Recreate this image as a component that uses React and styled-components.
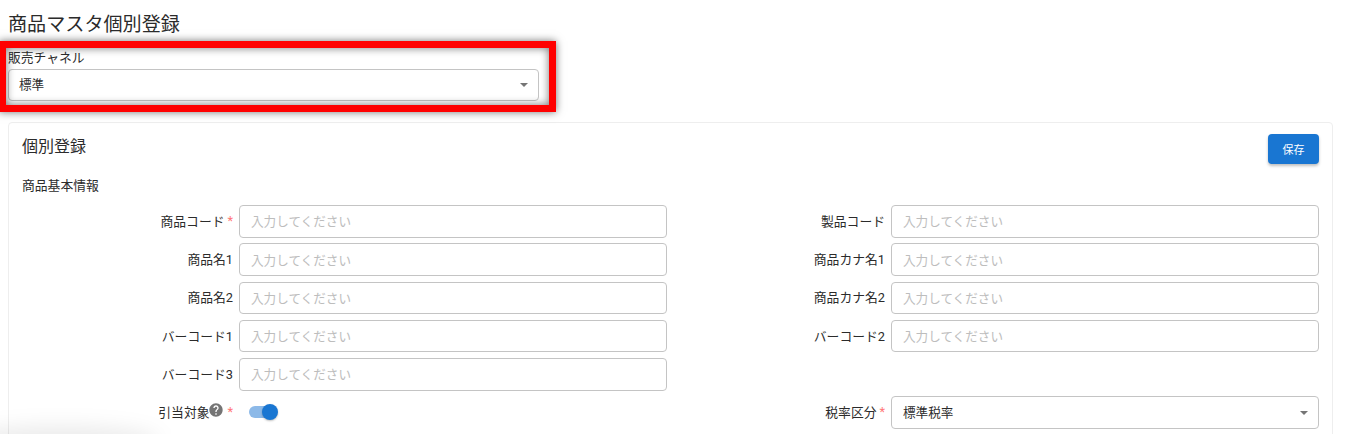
import React from 'react';
import styled, { createGlobalStyle } from 'styled-components';

const GlobalStyle = createGlobalStyle`
	html, body {
		margin: 0;
		height: 434px;
		overflow: hidden;
		background: #fff;
		font-family: Roboto, "Noto Sans CJK JP", sans-serif;
		color: #2b2b2b;
	}
	* {
		box-sizing: border-box;
	}
`;

const Page = styled.div`
	padding: 14px 13px 0 8px;
`;

const PageTitle = styled.h1`
	margin: 0;
	font-size: 19.1px;
	line-height: 22px;
	font-weight: 400;
`;

const ChannelBlock = styled.section`
	position: relative;
	margin-top: 15px;
	width: 531px;
`;

const Highlight = styled.div`
	position: absolute;
	left: -9px;
	top: -10px;
	width: 557px;
	height: 71px;
	border: 7px solid #ff0000;
	box-shadow: 0 0 8px rgba(0, 0, 0, 0.55), inset 0 0 8px rgba(0, 0, 0, 0.55);
	pointer-events: none;
`;

const ChannelLabel = styled.div`
	font-size: 12.8px;
	line-height: 14px;
	margin-bottom: 4px;
`;

const Field = styled.div`
	height: 32px;
	display: flex;
	align-items: center;
	justify-content: space-between;
	padding: 0 11px ${(p) => (p.$placeholder ? '1px' : '3px')} 10px;
	border: 1px solid #c4c4c4;
	border-radius: 4px;
	background: #fff;
	font-size: 12.6px;
	color: ${(p) => (p.$placeholder ? '#bdbdbd' : '#2b2b2b')};
`;

const FormField = styled(Field)`
	padding-left: 11px;
	height: 32.5px;
`;

const Caret = styled.span`
	width: 0;
	height: 0;
	margin-right: -1px;
	margin-top: 3px;
	border-left: 4px solid transparent;
	border-right: 4px solid transparent;
	border-top: 4px solid #757575;
`;

const Card = styled.section`
	margin-top: 21px;
	height: 320px;
	border: 1px solid #eeeeee;
	border-radius: 4px;
	padding: 11px 13px 0;
`;

const CardHeader = styled.div`
	display: flex;
	align-items: flex-start;
	justify-content: space-between;
`;

const CardTitle = styled.h2`
	margin: 3px 0 0;
	font-size: 16px;
	line-height: 19px;
	font-weight: 400;
`;

const SaveButton = styled.button`
	width: 51px;
	height: 30px;
	padding: 0;
	border: 0;
	border-radius: 4px;
	background: #1976d2;
	color: #fff;
	font: inherit;
	font-size: 11px;
	box-shadow: 0 2px 3px rgba(0, 0, 0, 0.25);
`;

const SectionTitle = styled.div`
	margin-top: 14px;
	font-size: 12.8px;
	line-height: 15px;
`;

const FormGrid = styled.div`
	margin-top: 12px;
	display: grid;
	grid-template-columns: 645px 652px;
	grid-auto-rows: 32.25px;
	row-gap: 6px;
	justify-content: space-between;
`;

const Row = styled.div`
	display: grid;
	grid-template-columns: 1fr 428px;
	column-gap: 6px;
	align-items: center;
`;

const Label = styled.label`
	display: flex;
	align-items: center;
	justify-content: flex-end;
	padding-bottom: 2px;
	font-size: 12.8px;
`;

const Required = styled.span`
	margin-left: 3px;
	color: #f77;
`;

const HelpIcon = styled.svg`
	width: 16px;
	height: 16px;
	margin: -3px 0 0 -1px;
	fill: #757575;
`;

const Toggle = styled.div`
	position: relative;
	width: 26px;
	height: 12px;
	margin-left: 10px;
	border-radius: 6px;
	background: #8cb9e8;
`;

const Thumb = styled.span`
	position: absolute;
	right: -3px;
	top: -2px;
	width: 16px;
	height: 16px;
	border-radius: 50%;
	background: #1976d2;
	box-shadow: 0 1px 2px rgba(0, 0, 0, 0.25);
`;

const CornerShade = styled.div`
	position: fixed;
	left: -40px;
	bottom: -22px;
	width: 200px;
	height: 30px;
	border-radius: 50%;
	background: rgba(0, 0, 0, 0.08);
	filter: blur(10px);
	pointer-events: none;
`;

const PLACEHOLDER = '入力してください';

const TextRow = ({ label, required }) => (
	<Row>
		<Label>
			{label}
			{required && <Required>*</Required>}
		</Label>
		<FormField $placeholder>{PLACEHOLDER}</FormField>
	</Row>
);

const App = () => (
	<Page>
		<GlobalStyle />
		<PageTitle>商品マスタ個別登録</PageTitle>

		<ChannelBlock>
			<ChannelLabel>販売チャネル</ChannelLabel>
			<Field>
				標準
				<Caret />
			</Field>
			<Highlight />
		</ChannelBlock>

		<Card>
			<CardHeader>
				<CardTitle>個別登録</CardTitle>
				<SaveButton>保存</SaveButton>
			</CardHeader>
			<SectionTitle>商品基本情報</SectionTitle>
			<FormGrid>
				<TextRow label="商品コード" required />
				<TextRow label="製品コード" />
				<TextRow label="商品名1" />
				<TextRow label="商品カナ名1" />
				<TextRow label="商品名2" />
				<TextRow label="商品カナ名2" />
				<TextRow label="バーコード1" />
				<TextRow label="バーコード2" />
				<TextRow label="バーコード3" />
				<div />
				<Row>
					<Label>
						引当対象
						<HelpIcon viewBox="0 0 24 24">
							<path d="M12 2C6.48 2 2 6.48 2 12s4.48 10 10 10 10-4.48 10-10S17.52 2 12 2zm1 17h-2v-2h2v2zm2.07-7.75l-.9.92C13.45 12.9 13 13.5 13 15h-2v-.5c0-1.1.45-2.1 1.17-2.83l1.24-1.26c.37-.36.59-.86.59-1.41 0-1.1-.9-2-2-2s-2 .9-2 2H8c0-2.21 1.79-4 4-4s4 1.79 4 4c0 .88-.36 1.68-.93 2.25z" />
						</HelpIcon>
						<Required>*</Required>
					</Label>
					<Toggle>
						<Thumb />
					</Toggle>
				</Row>
				<Row>
					<Label>
						税率区分
						<Required>*</Required>
					</Label>
					<FormField>
						標準税率
						<Caret />
					</FormField>
				</Row>
			</FormGrid>
		</Card>
		<CornerShade />
	</Page>
);

export default App;
